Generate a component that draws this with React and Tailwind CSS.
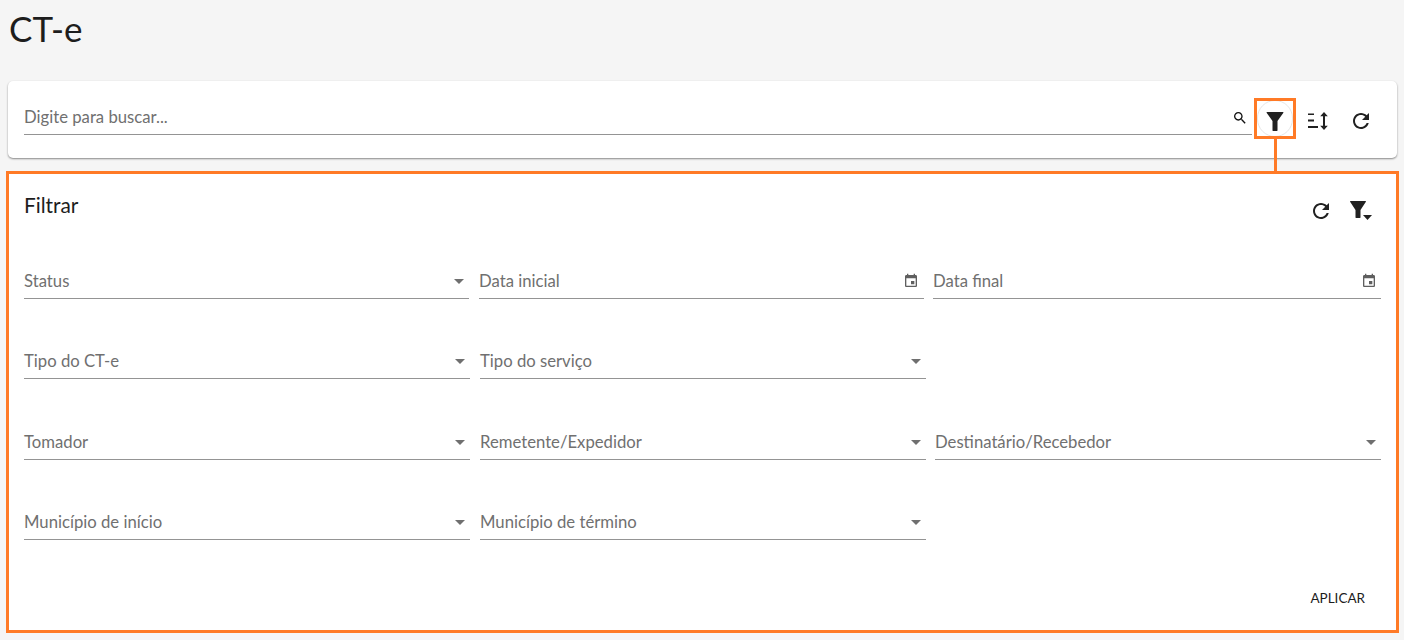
const FONT = "font-['Lato','Open_Sans',sans-serif]";

function Caret({ className = "" }) {
  return (
    <svg width="24" height="24" viewBox="0 0 24 24" className={className} fill="#6f6f6f">
      <path d="M7 10l5 5 5-5z" />
    </svg>
  );
}

function Calendar() {
  return (
    <svg width="16" height="16" viewBox="0 0 24 24" fill="#5f5f5f">
      <path d="M17 12h-5v5h5v-5zM16 1v2H8V1H6v2H5c-1.11 0-1.99.9-1.99 2L3 19c0 1.1.89 2 2 2h14c1.1 0 2-.9 2-2V5c0-1.100-.9-2-2-2h-1V1h-2zm3 18H5V8h14v11z" />
    </svg>
  );
}

function Refresh() {
  return (
    <svg width="24" height="24" viewBox="0 0 24 24" fill="#212121">
      <path d="M17.650 6.350C16.200 4.900 14.210 4 12 4c-4.420 0-7.990 3.580-7.990 8s3.570 8 7.990 8c3.730 0 6.840-2.550 7.730-6h-2.080c-.82 2.330-3.040 4-5.650 4-3.310 0-6-2.690-6-6s2.690-6 6-6c1.660 0 3.140.69 4.220 1.780L13 11h7V4l-2.350 2.350z" />
    </svg>
  );
}

function Funnel() {
  return (
    <svg width="24" height="24" viewBox="0 0 24 24" fill="#212121">
      <path d="M4 3h16c.4 0 .6.400.4.700L14.500 12v9.500c0 .3-.2.5-.5.5h-4c-.3 0-.5-.2-.5-.5V12L3.600 3.700c-.2-.3 0-.7.4-.7z" />
    </svg>
  );
}

function FunnelCaret() {
  return (
    <svg width="24" height="24" viewBox="0 0 24 24" fill="#212121">
      <path d="M1.500 2h15c.4 0 .6.400.4.700L11.500 11v7.500c0 .3-.2.5-.5.5H7c-.3 0-.5-.2-.5-.5V11L1.100 2.700c-.2-.3 0-.7.4-.7z" />
      <path d="M14 16h9l-4.500 5z" />
    </svg>
  );
}

function SortIcon() {
  return (
    <svg width="24" height="24" viewBox="0 0 24 24" fill="#212121">
      <path d="M2 4.500h6V6H2zM2 10.500h6v2H2zM2 17h10v2H2z" />
      <path d="M18 3l3.800 4.200h-2.800v9.600h2.800L18 21l-3.800-4.200h2.800V7.200h-2.800z" />
    </svg>
  );
}

function Search() {
  return (
    <svg width="16" height="16" viewBox="0 0 24 24" fill="#111">
      <path d="M15.500 14h-.79l-.28-.27C15.410 12.590 16 11.110 16 9.500 16 5.910 13.090 3 9.500 3S3 5.910 3 9.500 5.910 16 9.500 16c1.610 0 3.090-.59 4.230-1.570l.27.28v.79l5 4.990L20.490 19l-4.990-5zm-6 0C7.010 14 5 11.990 5 9.500S7.010 5 9.500 5 14 7.010 14 9.500 11.990 14 9.500 14z" />
    </svg>
  );
}

function Field({ label, icon = "caret" }) {
  return (
    <div className="flex h-[37px] items-center justify-between border-b border-[#949494] pt-[2px]">
      <span className="text-[16.7px] leading-5 text-[#707070]">{label}</span>
      {icon === "caret" && <Caret className="mr-[-2px]" />}
      {icon === "date" && <span className="mr-[4px] flex"><Calendar /></span>}
      {icon === "date-inner" && <span className="mr-[5px] flex"><Calendar /></span>}
    </div>
  );
}

function Row({ children, className = "" }) {
  return <div className={`grid h-[37px] grid-cols-[446px_446px_446px] gap-x-[10px] ${className}`}>{children}</div>;
}

export default function App() {
  return (
    <div className={`relative h-[640px] w-[1404px] overflow-hidden bg-[#f5f5f5] ${FONT}`}>
      <h1 className="pl-[9px] pt-[7px] text-[35px] font-normal leading-[42px] text-[#1d1d1d]">CT-e</h1>

      <div className="ml-[8px] mr-[7px] mt-[32px] flex h-[77px] items-start rounded-[5px] bg-white pl-[16px] shadow-[0_1px_2px_rgba(0,0,0,0.45)]">
        <div className="mt-[17px] flex h-[37px] w-[1228px] items-center justify-between border-b border-[#949494]">
          <span className="mt-[1px] text-[16.7px] leading-5 text-[#707070]">Digite para buscar...</span>
          <span className="mr-[4px] mt-[3px] flex"><Search /></span>
        </div>
        <div className="ml-[11px] mt-[28px] flex items-center gap-[19px]">
          <Funnel />
          <SortIcon />
          <Refresh />
        </div>
      </div>

      <div className="ml-[6px] mr-[5px] mt-[13px] h-[462px] border-[3px] border-[#ff7a26] bg-white pl-[15px] pr-[15px]">
        <div className="flex h-[88px] items-start justify-between">
          <h2 className="mt-[19px] text-[20.800px] font-normal leading-6 text-[#1d1d1d]">Filtrar</h2>
          <div className="mr-[8px] mt-[25px] flex items-center gap-[16px]">
            <Refresh />
            <FunnelCaret />
          </div>
        </div>
        <div className="flex flex-col">
          <Row>
            <div className="w-[445px]"><Field label="Status" /></div>
            <div className="-ml-[1px] w-[445px]"><Field label="Data inicial" icon="date-inner" /></div>
            <div className="-ml-[3px] w-[448px]"><Field label="Data final" icon="date" /></div>
          </Row>
          <Row className="mt-[43px]">
            <Field label="Tipo do CT-e" />
            <Field label="Tipo do serviço" />
          </Row>
          <Row className="mt-[44px]">
            <Field label="Tomador" />
            <Field label="Remetente/Expedidor" />
            <div className="-ml-[1px] w-[446px]"><Field label="Destinatário/Recebedor" /></div>
          </Row>
          <Row className="mt-[43px]">
            <Field label="Município de início" />
            <Field label="Município de término" />
          </Row>
        </div>
        <div className="mt-[48px] flex justify-end pr-[16px]">
          <span className="text-[13.500px] leading-5 text-[#1d1d1d]">APLICAR</span>
        </div>
      </div>

      <div className="absolute left-[1257px] top-[100px] h-[37px] w-[36px] rounded-full border border-[#e6e6e6]" />
      <div className="absolute left-[1254px] top-[98px] h-[41px] w-[42px] border-[3px] border-[#ff7a26]" />
      <div className="absolute left-[1274px] top-[139px] h-[33px] w-[3px] bg-[#ff7a26]" />
    </div>
  );
}
